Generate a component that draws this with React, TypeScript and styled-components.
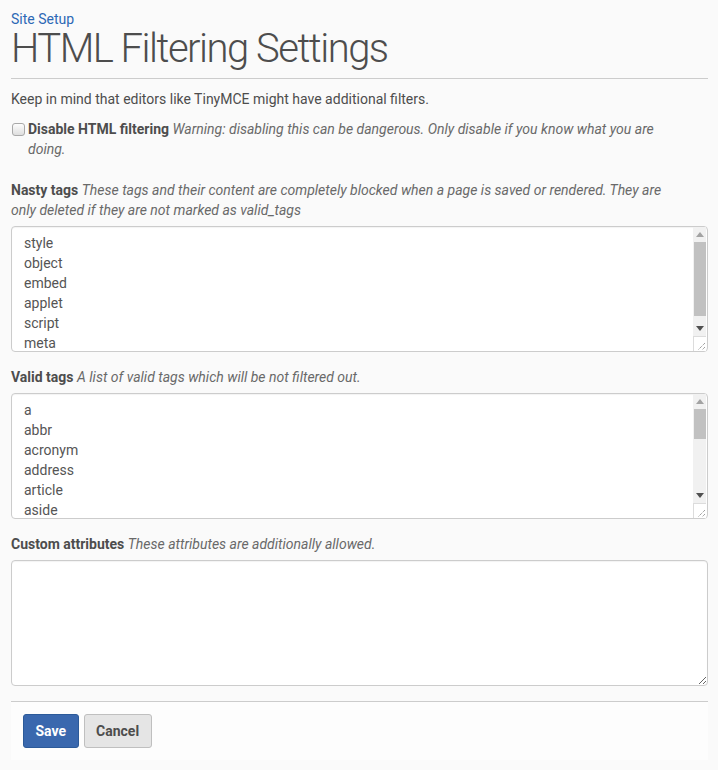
import React from "react";
import styled, { createGlobalStyle } from "styled-components";

const GlobalStyle = createGlobalStyle`
  html, body { margin: 0; padding: 0; background: #fafafa; }
  body { font-family: Roboto, "Liberation Sans", sans-serif; font-size: 14px; line-height: 20px; color: #4d4d4d; }
  * { box-sizing: border-box; }
`;

const Page = styled.div`
  padding: 13px 10px 0 11px;
  display: flex;
  flex-direction: column;
`;

const Crumb = styled.a`
  display: block;
  color: #2c68b5;
  text-decoration: none;
  font-size: 14px;
  line-height: 12px;
`;

const Title = styled.h1`
  margin: 0;
  font-size: 40px;
  line-height: 47px;
  font-weight: 300;
  letter-spacing: -1.5px;
  color: #4d4d4d;
`;

const Rule = styled.hr<{ $top: number; $bottom: number }>`
  border: 0;
  border-top: 1px solid #cccccc;
  margin: ${(p) => `${p.$top}px 0 ${p.$bottom}px`};
  width: 100%;
`;

const Intro = styled.p`
  margin: 0 0 10px;
`;

const CheckRow = styled.div`
  display: flex;
  align-items: flex-start;
  gap: 3px;
  margin-bottom: 21px;
  padding-right: 32px;
`;

const Check = styled.input`
  appearance: none;
  width: 13px;
  height: 13px;
  margin: 4px 0 0 1px;
  flex: none;
  border: 1px solid #a9a9a9;
  border-radius: 3px;
  background: linear-gradient(#fdfdfd, #dedede);
`;

const Label = styled.label`
  font-weight: 700;
  color: #4d4d4d;
`;

const Help = styled.span`
  font-style: italic;
  font-weight: 400;
  color: #696969;
`;

const Field = styled.div`
  display: flex;
  flex-direction: column;
  margin-bottom: 15px;
`;

const LabelBlock = styled.div`
  margin-bottom: 6px;
  padding-right: 32px;
`;

const AreaWrap = styled.div`
  position: relative;
  width: 100%;
`;

const Area = styled.textarea`
  display: block;
  width: 100%;
  height: 126px;
  padding: 6px 12px;
  border: 1px solid #cccccc;
  border-radius: 4px;
  background: #ffffff;
  box-shadow: inset 0 1px 1px rgba(0, 0, 0, 0.05);
  font-family: Roboto, "Liberation Sans", sans-serif;
  font-size: 14px;
  line-height: 20px;
  color: #555555;
  overflow: hidden;
  resize: vertical;
  outline: none;
`;

const Scrollbar = styled.div`
  position: absolute;
  top: 1px;
  right: 2px;
  bottom: 1px;
  width: 13px;
  display: flex;
  flex-direction: column;
`;

const Track = styled.div`
  flex: 1;
  background: #f1f1f1;
  display: flex;
  flex-direction: column;
  align-items: stretch;
`;

const ArrowBtn = styled.div`
  height: 15px;
  flex: none;
  display: flex;
  align-items: center;
  justify-content: center;
`;

const Thumb = styled.div<{ $h: number }>`
  height: ${(p) => p.$h}px;
  background: #c1c1c1;
  margin: 0 0 0 1px;
`;

const Spacer = styled.div`
  flex: 1;
`;

const Corner = styled.div`
  height: 15px;
  flex: none;
  background: #ffffff;
  border-left: 1px solid #dcdcdc;
  border-top: 1px solid #dcdcdc;
  display: flex;
  align-items: flex-end;
  justify-content: flex-end;
`;

const Actions = styled.div`
  background: #fdfdfd;
  padding: 12px;
  display: flex;
  gap: 5px;
`;

const Button = styled.button<{ $primary?: boolean }>`
  height: 34px;
  padding: 0 11.5px;
  border-radius: 3px;
  border: 1px solid ${(p) => (p.$primary ? "#2c5a99" : "#bfbfbf")};
  background: ${(p) => (p.$primary ? "#3a68ae" : "#e5e5e5")};
  color: ${(p) => (p.$primary ? "#ffffff" : "#4d4d4d")};
  font-family: Roboto, "Liberation Sans", sans-serif;
  font-weight: 700;
  font-size: 14px;
  cursor: pointer;
`;

const Grip = () => (
  <svg width="10" height="10" viewBox="0 0 10 10">
    <path d="M9 2 L2 9 M9 6 L6 9" stroke="#777" strokeWidth="1" strokeDasharray="1 1" fill="none" />
  </svg>
);

const Up = () => (
  <svg width="8" height="5" viewBox="0 0 8 5">
    <path d="M0 5 L4 0 L8 5 Z" fill="#a3a3a3" />
  </svg>
);

const Down = () => (
  <svg width="8" height="5" viewBox="0 0 8 5">
    <path d="M0 0 L8 0 L4 5 Z" fill="#505050" />
  </svg>
);

const FakeScroll = ({ thumb }: { thumb: number }) => (
  <Scrollbar>
    <Track>
      <ArrowBtn>
        <Up />
      </ArrowBtn>
      <Thumb $h={thumb} />
      <Spacer />
      <ArrowBtn>
        <Down />
      </ArrowBtn>
    </Track>
    <Corner>
      <Grip />
    </Corner>
  </Scrollbar>
);

const nasty = ["style", "object", "embed", "applet", "script", "meta"].join("\n");
const valid = ["a", "abbr", "acronym", "address", "article", "aside", "audio", "b", "bdo", "big", "blockquote", "body", "br", "canvas", "caption", "cite", "code", "col", "colgroup", "command", "datalist", "dd", "del", "details", "dfn", "div", "dl", "dt", "em", "embed", "figcaption", "figure", "font", "footer", "form", "h1", "h2", "h3", "h4", "h5", "h6", "head", "header", "hgroup", "hr", "html", "i", "iframe", "img", "ins", "kbd", "keygen", "li", "map", "mark", "meter", "nav", "object", "ol", "output", "p", "param", "pre", "progress", "q", "rp", "rt", "ruby", "s", "samp", "section", "small", "source", "span", "strike", "strong", "sub", "summary", "sup", "table", "tbody", "td", "tfoot", "th", "thead", "time", "title", "tr", "tt", "u", "ul", "var", "video"].join("\n");

export default function App() {
  return (
    <>
      <GlobalStyle />
      <Page>
        <Crumb href="#">Site Setup</Crumb>
        <Title>HTML Filtering Settings</Title>
        <Rule $top={6} $bottom={10} />
        <Intro>Keep in mind that editors like TinyMCE might have additional filters.</Intro>
        <CheckRow>
          <Check type="checkbox" id="disable" />
          <div>
            <Label htmlFor="disable">Disable HTML filtering</Label>{" "}
            <Help>Warning: disabling this can be dangerous. Only disable if you know what you are doing.</Help>
          </div>
        </CheckRow>
        <Field>
          <LabelBlock>
            <Label>Nasty tags</Label>{" "}
            <Help>
              These tags and their content are completely blocked when a page is saved or rendered. They are only
              deleted if they are not marked as valid_tags
            </Help>
          </LabelBlock>
          <AreaWrap>
            <Area readOnly defaultValue={nasty} />
            <FakeScroll thumb={74} />
          </AreaWrap>
        </Field>
        <Field>
          <LabelBlock>
            <Label>Valid tags</Label> <Help>A list of valid tags which will be not filtered out.</Help>
          </LabelBlock>
          <AreaWrap>
            <Area readOnly defaultValue={valid} />
            <FakeScroll thumb={30} />
          </AreaWrap>
        </Field>
        <Field>
          <LabelBlock>
            <Label>Custom attributes</Label> <Help>These attributes are additionally allowed.</Help>
          </LabelBlock>
          <AreaWrap>
            <Area defaultValue="" />
          </AreaWrap>
        </Field>
        <Rule $top={0} $bottom={0} />
        <Actions>
          <Button $primary>Save</Button>
          <Button>Cancel</Button>
        </Actions>
      </Page>
    </>
  );
}
